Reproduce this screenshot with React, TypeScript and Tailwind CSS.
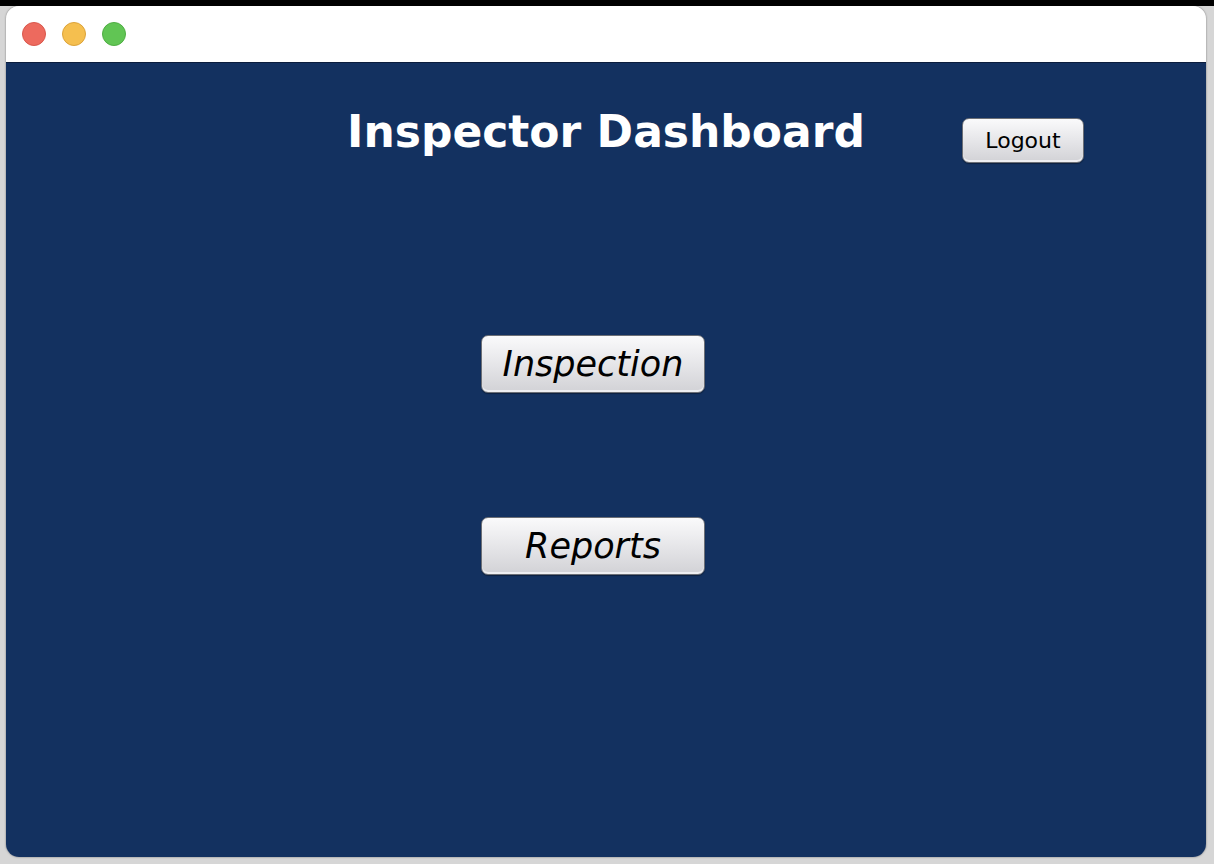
const font = { fontFamily: '"DejaVu Sans", "Liberation Sans", sans-serif' };

const MacButton = ({ label, className }: { label: string; className: string }) => (
  <button
    className={`rounded-[7px] border border-[#6c6f76] bg-gradient-to-b from-[#fafafb] via-[#e6e6e9] to-[#d2d2d6] text-black shadow-[inset_0_-2px_0_#eeeef1,0_1px_1px_rgba(0,0,0,0.35)] ${className}`}
    style={font}
  >
    {label}
  </button>
);

export default function App() {
  return (
    <div className="w-[1214px] h-[864px] overflow-hidden bg-[#d6d6d6] flex flex-col">
      {/* desktop strip behind the window */}
      <div className="h-[6px] bg-black shrink-0" />
      <div className="flex-1 pl-[6px] pr-[8px] pb-[6px]">
        <div className="w-[1200px] h-[851px] rounded-[13px] overflow-hidden flex flex-col shadow-[0_0_2px_rgba(0,0,0,0.5)]">
          {/* title bar */}
          <div className="h-[57px] shrink-0 bg-white border-b border-[#0b1d3d] flex items-center gap-[16px] pl-[16px]">
            <span className="w-[24px] h-[24px] rounded-full bg-[#ed6a5e] border border-[#d9574c]" />
            <span className="w-[24px] h-[24px] rounded-full bg-[#f5bf4f] border border-[#dca33a]" />
            <span className="w-[24px] h-[24px] rounded-full bg-[#61c554] border border-[#4fae43]" />
          </div>

          {/* content */}
          <div className="flex-1 bg-[#133160] flex flex-col">
            <div className="grid grid-cols-[1fr_auto_1fr] items-start pt-[39px]">
              <div />
              <h1 className="text-white font-bold text-[44px] leading-[60px]" style={font}>
                Inspector Dashboard
              </h1>
              <div className="pl-[97px] pt-[16px]">
                <MacButton label="Logout" className="w-[122px] h-[45px] text-[22px]" />
              </div>
            </div>

            <div className="flex flex-col items-start pl-[475px] pt-[172px] gap-[124px]">
              <MacButton label="Inspection" className="w-[224px] h-[58px] text-[35px] italic" />
              <MacButton label="Reports" className="w-[224px] h-[58px] text-[35px] italic" />
            </div>
          </div>
        </div>
      </div>
    </div>
  );
}
